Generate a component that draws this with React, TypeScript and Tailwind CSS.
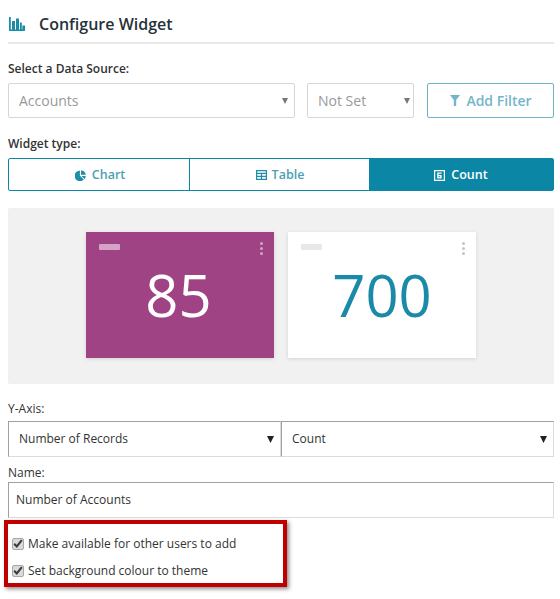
import React from "react";

const font = { fontFamily: '"Open Sans", "Noto Sans", sans-serif' };

function Caret({ className = "", w = 7, h = 7 }: { className?: string; w?: number; h?: number }) {
  return (
    <svg width={w} height={h} viewBox="0 0 8 7" preserveAspectRatio="none" className={className}>
      <path d="M0 0h8L4 7z" fill="currentColor" />
    </svg>
  );
}

function FauxSelect({ label, className, muted }: { label: string; className: string; muted?: boolean }) {
  return (
    <div className={className}>
      <span>{label}</span>
      {muted ? <Caret className="text-[#777]" w={6} h={6} /> : <Caret className="text-[#222]" />}
    </div>
  );
}

function Check({ label }: { label: string }) {
  return (
    <div className="flex items-center h-[27px] gap-[4px]">
      <span className="w-[12px] h-[12px] rounded-[2px] bg-[#d9d9d9] border border-[#a8a8a8] flex items-center justify-center">
        <svg width="10" height="9" viewBox="0 0 10 9">
          <path d="M1.2 4.8 3.8 7.4 8.8 1.2" fill="none" stroke="#3a3a3a" strokeWidth="2" />
        </svg>
      </span>
      <span className="text-[12px] text-[#333]">{label}</span>
    </div>
  );
}

function Card({ value, bg, num, bar, dots }: { value: string; bg: string; num: string; bar: string; dots: string }) {
  return (
    <div className={`relative w-[188px] h-[126px] flex items-center justify-center shadow-[0_1px_4px_rgba(0,0,0,0.12)] ${bg}`}>
      <div className={`absolute left-[13px] top-[12px] w-[21px] h-[6px] rounded-[1px] ${bar}`} />
      <div className="absolute right-[11px] top-[10px] flex flex-col gap-[2px]">
        <span className={`w-[3px] h-[3px] rounded-full ${dots}`} />
        <span className={`w-[3px] h-[3px] rounded-full ${dots}`} />
        <span className={`w-[3px] h-[3px] rounded-full ${dots}`} />
      </div>
      <span className={`text-[58px] leading-none -mt-[1px] ${num}`}>{value}</span>
    </div>
  );
}

export default function App() {
  return (
    <div style={font} className="w-[560px] h-[599px] bg-white overflow-hidden pl-2 pr-[6px] text-[#333]">
      <div className="h-[44px] border-b-2 border-[#e8e8e8] flex items-center pt-[6px]">
        <svg width="16" height="14" viewBox="0 0 16 14" className="ml-[1px] mb-[1px]">
          <path d="M0 0h1.8v12.4H16V14H0zM3 4h3v8.4H3zM7 1.5h3v10.9H7zM11 5.5h1.8v6.9H11zM13.4 8.5H16v3.9h-2.6z" fill="#1a8ca8" />
        </svg>
        <span className="ml-[14px] text-[16px] font-semibold text-[#26323a]">Configure Widget</span>
      </div>

      <div className="mt-[17px] text-[12px] leading-4 font-semibold text-[#333]">Select a Data Source:</div>

      <div className="mt-[6px] flex h-[35px]">
        <FauxSelect
          label="Accounts"
          muted
          className="w-[287px] border border-[#d6d6d6] rounded-[2px] flex items-center justify-between pl-[10px] pr-[6px] text-[14px] text-[#999]"
        />
        <FauxSelect
          label="Not Set"
          muted
          className="ml-[12px] w-[107px] border border-[#d6d6d6] rounded-[2px] flex items-center justify-between pl-[10px] pr-[3px] text-[14px] text-[#999]"
        />
        <div className="ml-[13px] w-[127px] h-[35px] border border-[#6db3c6] rounded-[2px] flex items-center justify-center gap-[6px] pl-[1px] text-[14px] font-semibold text-[#74b6c9]">
          <svg width="10" height="11" viewBox="0 0 10 11">
            <path d="M0 0h10L6.2 5v6H3.8V5z" fill="#74b6c9" />
          </svg>
          Add Filter
        </div>
      </div>

      <div className="mt-[18px] text-[12px] leading-4 font-semibold text-[#333]">Widget type:</div>

      <div className="mt-[6px] h-[33px] w-[546px] flex border border-[#0b87a5] rounded-[2px] text-[12.5px] font-semibold">
        <div className="w-[181px] border-r border-[#0b87a5] flex items-center justify-center gap-[6px] pl-[2px] pt-[1px] text-[#4a9fb5]">
          <svg width="11" height="11" viewBox="0 0 11 11">
            <path d="M4.9 0.4v5.4l3.9 3.8A5.4 5.4 0 1 1 4.9 0.4z" fill="#1f8ca8" />
            <path d="M6 0.4A5 5 0 0 1 10.8 4.8H6zM6.5 5.9h4.3A5 5 0 0 1 9.5 8.9z" fill="#1f8ca8" />
          </svg>
          Chart
        </div>
        <div className="w-[179px] flex items-center justify-center gap-[5px] pl-[1px] pt-[1px] text-[#4a9fb5]">
          <svg width="11" height="10" viewBox="0 0 11 10">
            <path d="M0.6 0.6h9.8v8.8H0.6zM0.6 3.4h9.8M0.6 6.3h9.8M5.5 3.4v6" fill="none" stroke="#1f8ca8" strokeWidth="1.2" />
          </svg>
          Table
        </div>
        <div className="flex-1 bg-[#0b87a5] flex items-center justify-center gap-[6px] pt-[1px] text-white">
          <svg width="11" height="11" viewBox="0 0 11 11">
            <path d="M0.6 0.6h9.8v9.8H0.6z" fill="#0b87a5" stroke="#fff" strokeWidth="1.2" />
            <path d="M3.2 2.6h4.4v1.2H4.6v1.2h3v3.4H3.2zM4.6 6.2v1H6.2v-1z" fill="#fff" />
          </svg>
          Count
        </div>
      </div>

      <div className="mt-[17px] h-[176px] w-[546px] bg-[#f1f1f1] rounded-[2px] flex items-start pt-[24px] pl-[78px] gap-[14px]">
        <Card value="85" bg="bg-[#9f4384]" num="text-white -ml-[3px]" bar="bg-[#d5a3c8]" dots="bg-[#d5a3c8]" />
        <Card value="700" bg="bg-white" num="text-[#1b8aa8]" bar="bg-[#e8e8e8]" dots="bg-[#c4c4c4]" />
      </div>

      <div className="mt-[17px] text-[12px] leading-4 text-[#333]">Y-Axis:</div>

      <div className="mt-[4px] flex h-[36px] w-[546px] text-[12px] text-[#333]">
        <FauxSelect
          label="Number of Records"
          className="w-[273px] border border-[#a0a0a0] border-b-[#dcdcdc] border-r-[#dcdcdc] flex items-center justify-between pl-[10px] pr-[6px]"
        />
        <FauxSelect
          label="Count"
          className="w-[273px] border border-[#a0a0a0] border-b-[#dcdcdc] border-r-[#dcdcdc] flex items-center justify-between pl-[10px] pr-[6px]"
        />
      </div>

      <div className="mt-[8px] text-[12px] leading-4 text-[#333]">Name:</div>

      <div className="mt-[1px] w-[546px] h-[36px] border border-[#a0a0a0] border-b-[#dcdcdc] border-r-[#dcdcdc] flex items-center pl-[7px] text-[12px] text-[#333]">
        Number of Accounts
      </div>

      <div className="-ml-[4px] mt-[2px] w-[283px] h-[67px] border-[4px] border-[#c00000] shadow-[2px_2px_4px_rgba(0,0,0,0.45)] pl-[4px] pt-[6px]">
        <Check label="Make available for other users to add" />
        <Check label="Set background colour to theme" />
      </div>
    </div>
  );
}
